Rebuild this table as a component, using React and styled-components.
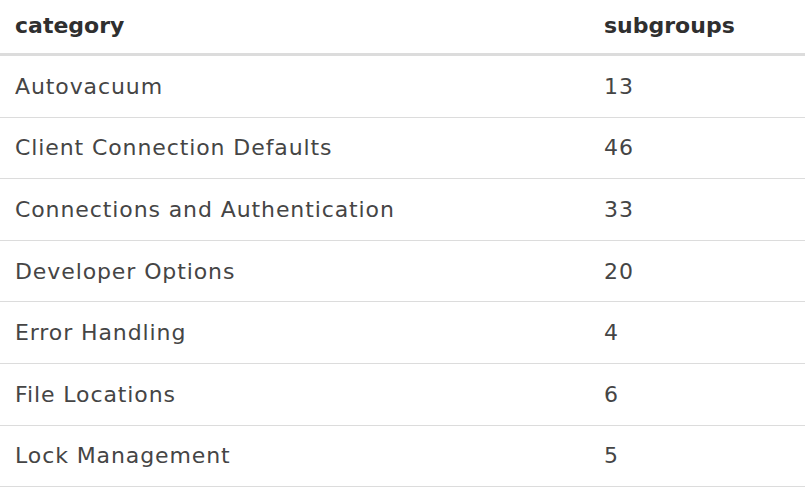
import React from 'react'
import styled, { createGlobalStyle } from 'styled-components'

const GlobalStyle = createGlobalStyle`
    html, body {
        margin: 0;
        padding: 0;
        background: #fff;
    }
`

const rows = [
    { category: 'Autovacuum', subgroups: 13 },
    { category: 'Client Connection Defaults', subgroups: 46 },
    { category: 'Connections and Authentication', subgroups: 33 },
    { category: 'Developer Options', subgroups: 20 },
    { category: 'Error Handling', subgroups: 4 },
    { category: 'File Locations', subgroups: 6 },
    { category: 'Lock Management', subgroups: 5 },
]

const App = () => {
    return (
        <>
            <GlobalStyle />
            <StyledTable>
                <thead>
                    <tr>
                        <th>category</th>
                        <th>subgroups</th>
                    </tr>
                </thead>
                <tbody>
                    {rows.map((row) => (
                        <tr key={row.category}>
                            <td>{row.category}</td>
                            <td>{row.subgroups}</td>
                        </tr>
                    ))}
                </tbody>
            </StyledTable>
        </>
    )
}

export default App

const StyledTable = styled.table`
    width: 805px;
    border-collapse: collapse;
    font-family: 'DejaVu Sans', 'Open Sans', sans-serif;
    color: #454545;
    font-size: 22px;

    th,
    td {
        text-align: left;
        padding: 0 15px;
        vertical-align: middle;
    }

    th {
        height: 50px;
        font-weight: 700;
        color: #2f2f2f;
        border-bottom: 3px solid #dcdcdc;
        padding-bottom: 3px;
    }

    td {
        height: 60.6px;
        border-bottom: 1px solid #dcdcdc;
        letter-spacing: 0.9px;
    }

    td:first-child,
    th:first-child {
        width: 559px;
    }
`
